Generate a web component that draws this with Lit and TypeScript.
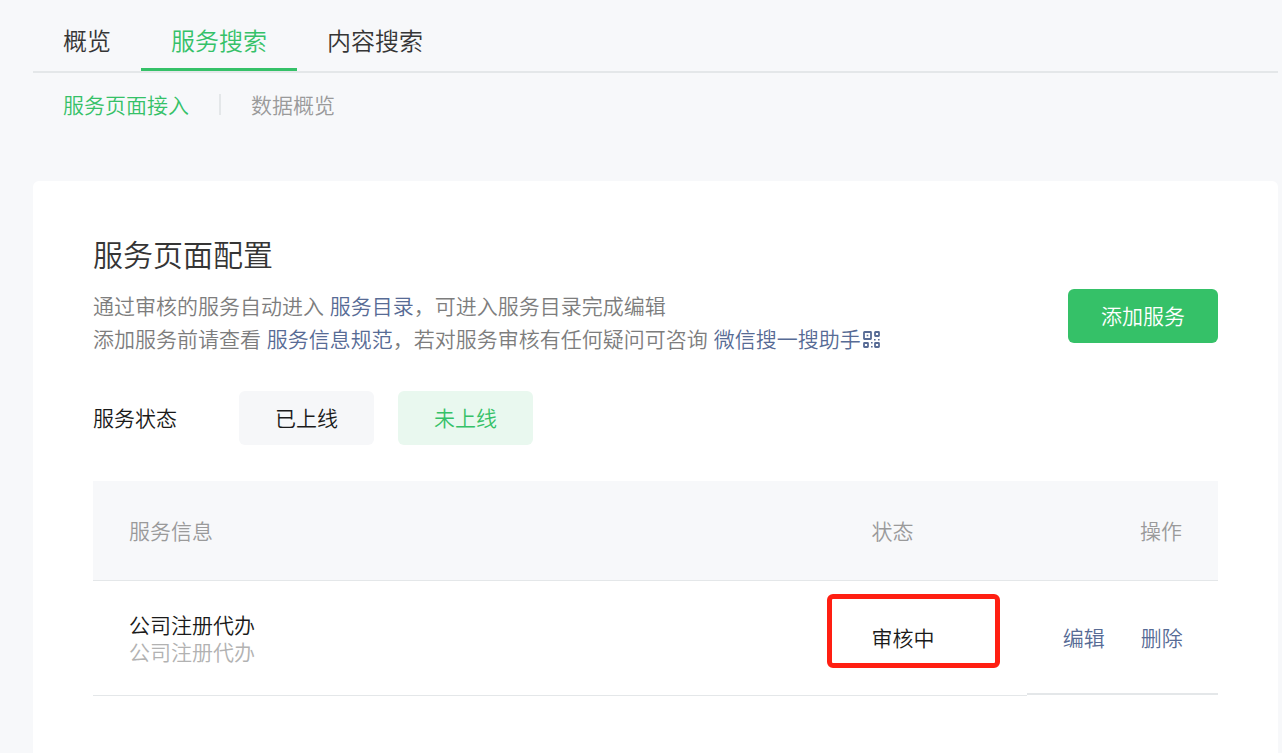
import { LitElement, html, css } from "lit";
import { customElement, state } from "lit/decorators.js";

interface Service {
  name: string;
  desc: string;
  status: string;
}

@customElement("app-root")
export class AppRoot extends LitElement {
  @state() private tab = 1;
  @state() private online = false;

  private tabs = ["概览", "服务搜索", "内容搜索"];
  private services: Service[] = [
    { name: "公司注册代办", desc: "公司注册代办", status: "审核中" },
  ];

  static styles = css`
    :host {
      display: flex;
      flex-direction: column;
      box-sizing: border-box;
      min-height: 100vh;
      padding: 0 4px 0 33px;
      background: #f7f8fa;
      color: #1a1a1a;
      font: 350 21px/33px "Liberation Sans", "Noto Sans CJK SC", sans-serif;
    }
    a {
      color: #576b95;
      text-decoration: none;
    }
    button {
      height: 54px;
      border: 0;
      border-radius: 6px;
      font: inherit;
      cursor: pointer;
    }
    .tabs {
      display: flex;
      border-bottom: 2px solid #e4e7e9;
    }
    .tab {
      padding: 16px 30px 0;
      border-bottom: 3px solid transparent;
      font-size: 24px;
      line-height: 52px;
      color: #353535;
    }
    .tab.on {
      color: #35c168;
      border-color: #35c168;
    }
    .sub {
      display: flex;
      align-items: center;
      padding: 16px 30px 0;
    }
    .sub a {
      color: #9a9a9a;
    }
    .sub a.on {
      color: #35c168;
    }
    .sub a + a::before {
      content: "";
      display: inline-block;
      width: 2px;
      height: 21px;
      margin: 0 30px;
      vertical-align: -2px;
      background: #e4e7e9;
    }
    .card {
      flex: 1;
      margin-top: 59px;
      padding: 50px 60px;
      border-radius: 6px 6px 0 0;
      background: #fff;
    }
    .head {
      display: flex;
      justify-content: space-between;
      align-items: flex-end;
    }
    h2 {
      margin: 0 0 9px;
      font-size: 30px;
      line-height: 50px;
      font-weight: 350;
      color: #353535;
    }
    .head p {
      margin: 0;
      color: #7d7d7d;
    }
    .qr {
      width: 17px;
      height: 17px;
      margin-left: 2px;
      vertical-align: -1px;
    }
    .add {
      flex: none;
      margin-bottom: 13px;
      padding: 0 33px;
      background: #35c168;
      color: #fff;
    }
    .filter {
      display: flex;
      align-items: center;
      gap: 24px;
      margin: 35px 0 36px;
    }
    .label {
      width: 122px;
    }
    .pill {
      padding: 0 36px;
      background: #f6f7f9;
      color: #1a1a1a;
    }
    .pill.on {
      background: #e9f8ef;
      color: #35c168;
    }
    table {
      width: 100%;
      table-layout: fixed;
      border-spacing: 0;
    }
    th,
    td {
      box-sizing: border-box;
      padding: 0 36px;
      text-align: left;
      font-weight: 350;
      border-bottom: 1px solid #e4e7e9;
    }
    th {
      height: 100px;
      padding-top: 2px;
      background: #f7f8fa;
      color: #9a9a9a;
    }
    td {
      height: 115px;
    }
    td.info {
      padding-top: 2px;
    }
    .info {
      width: 66%;
    }
    .narrow {
      width: 17%;
    }
    .name,
    .desc {
      line-height: 27px;
    }
    .desc {
      color: #b2b2b2;
    }
    .status {
      position: relative;
    }
    .mark {
      position: absolute;
      inset: 13px 27px 27px -9px;
      border: 5px solid #ff1f12;
      border-radius: 6px;
    }
    .ops {
      text-align: right;
      white-space: nowrap;
    }
    td.ops {
      border-bottom-color: transparent;
      background: linear-gradient(#e4e7e9, #e4e7e9) 0 100% / 100% 2px no-repeat
        padding-box;
    }
    td.ops a + a {
      margin-left: 36px;
    }
  `;

  render() {
    return html`
      <nav class="tabs">
        ${this.tabs.map(
          (t, i) => html`<a
            href="#"
            class="tab ${i === this.tab ? "on" : ""}"
            @click=${(e: Event) => {
              e.preventDefault();
              this.tab = i;
            }}
            >${t}</a
          >`
        )}
      </nav>
      <nav class="sub"><a href="#" class="on">服务页面接入</a><a href="#">数据概览</a></nav>
      <main class="card">
        <div class="head">
          <div>
            <h2>服务页面配置</h2>
            <p>通过审核的服务自动进入 <a href="#">服务目录</a>，可进入服务目录完成编辑</p>
            <p>添加服务前请查看 <a href="#">服务信息规范</a>，若对服务审核有任何疑问可咨询 <a href="#">微信搜一搜助手<svg class="qr" viewBox="0 0 17 17" fill="none" stroke="currentColor" stroke-width="1.8" aria-hidden="true"><rect x="1" y="1" width="7" height="7" rx="0.5"/><rect x="12" y="1" width="4" height="4" rx="0.5"/><rect x="1" y="12" width="4" height="4" rx="0.5"/><rect x="12" y="12" width="4" height="4" rx="0.5"/><path fill="currentColor" stroke="none" d="M3.7 3.7h1.6v1.6H3.7zM11 8h1.6v1.6H11zM15 8h1.6v1.6H15zM8 11h1.6v1.6H8zM8 15h1.6v1.6H8z"/></svg></a></p>
          </div>
          <button class="add">添加服务</button>
        </div>
        <div class="filter" role="group" aria-labelledby="st">
          <span class="label" id="st">服务状态</span>
          <button class="pill ${this.online ? "on" : ""}" @click=${() => (this.online = true)}>已上线</button>
          <button class="pill ${this.online ? "" : "on"}" @click=${() => (this.online = false)}>未上线</button>
        </div>
        <table>
          <thead>
            <tr>
              <th class="info">服务信息</th>
              <th class="narrow">状态</th>
              <th class="narrow ops">操作</th>
            </tr>
          </thead>
          <tbody>
            ${this.services.map(
              (s) => html`<tr>
                <td class="info">
                  <div class="name">${s.name}</div>
                  <div class="desc">${s.desc}</div>
                </td>
                <td class="status">${s.status}<span class="mark"></span></td>
                <td class="ops"><a href="#">编辑</a><a href="#">删除</a></td>
              </tr>`
            )}
          </tbody>
        </table>
      </main>
    `;
  }
}
